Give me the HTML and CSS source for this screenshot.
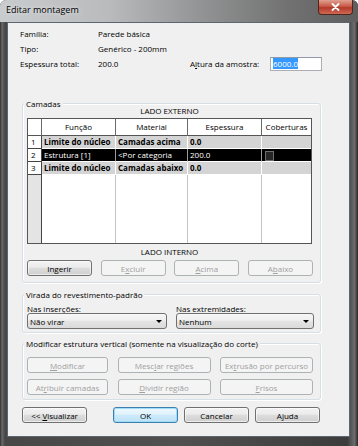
FILE: index.html
```html
<!DOCTYPE html>
<html lang="pt-BR">
<head>
    <meta charset="UTF-8">
    <title>Editar montagem</title>
    <link rel="stylesheet" href="styles.css">
</head>
<body>
<div class="window">
    <div class="titlebar">
        <span class="title">Editar montagem</span>
        <span class="close-btn">
            <svg width="9" height="8" viewBox="0 0 9 8"><path d="M1.5 1 L7.5 7 M7.5 1 L1.5 7" stroke="#fff" stroke-width="1.8" stroke-linecap="round"/></svg>
        </span>
    </div>

    <div class="client">
        <div class="info">
            <div class="info-row"><span class="info-label">Família:</span><span>Parede básica</span></div>
            <div class="info-row"><span class="info-label">Tipo:</span><span>Genérico - 200mm</span></div>
            <div class="info-row">
                <span class="info-label">Espessura total:</span>
                <span class="info-value">200.0</span>
                <span class="height-label">A<u>l</u>tura da amostra:</span>
                <span class="textbox"><span class="selected">6000.0</span></span>
            </div>
        </div>

        <!-- Camadas -->
        <div class="group group-layers">
            <span class="group-title">Camadas</span>
            <div class="side-label">LADO EXTERNO</div>
            <div class="layers-table">
                <div class="t-row t-head">
                    <div class="cell idx"></div>
                    <div class="cell">Função</div>
                    <div class="cell">Material</div>
                    <div class="cell">Espessura</div>
                    <div class="cell">Coberturas</div>
                </div>
                <div class="t-row t-core">
                    <div class="cell idx">1</div>
                    <div class="cell">Limite do núcleo</div>
                    <div class="cell">Camadas acima</div>
                    <div class="cell">0.0</div>
                    <div class="cell"></div>
                </div>
                <div class="t-row t-selected">
                    <div class="cell idx">2</div>
                    <div class="cell">Estrutura [1]</div>
                    <div class="cell">&lt;Por categoria</div>
                    <div class="cell">200.0</div>
                    <div class="cell"><span class="checkbox"></span></div>
                </div>
                <div class="t-row t-core">
                    <div class="cell idx">3</div>
                    <div class="cell">Limite do núcleo</div>
                    <div class="cell">Camadas abaixo</div>
                    <div class="cell">0.0</div>
                    <div class="cell"></div>
                </div>
                <div class="t-row t-fill">
                    <div class="cell idx"></div>
                    <div class="cell"></div>
                    <div class="cell"></div>
                    <div class="cell"></div>
                    <div class="cell"></div>
                </div>
            </div>
            <div class="side-label">LADO INTERNO</div>
            <div class="btn-row four">
                <button class="btn">In<u>g</u>erir</button>
                <button class="btn disabled">E<u>x</u>cluir</button>
                <button class="btn disabled"><u>A</u>cima</button>
                <button class="btn disabled">A<u>b</u>aixo</button>
            </div>
        </div>

        <!-- Virada do revestimento -->
        <div class="group group-wrap">
            <span class="group-title">Virada do revestimento-padrão</span>
            <div class="combo-grid">
                <span>Nas <u>i</u>nserções:</span>
                <span>Nas <u>e</u>xtremidades:</span>
                <div class="combo"><span>Não virar</span><span class="arrow"></span></div>
                <div class="combo"><span>Nenhum</span><span class="arrow"></span></div>
            </div>
        </div>

        <!-- Estrutura vertical -->
        <div class="group group-vertical">
            <span class="group-title">Modificar estrutura vertical (somente na visualização do corte)</span>
            <div class="btn-grid">
                <button class="btn disabled"><u>M</u>odificar</button>
                <button class="btn disabled">Mesc<u>l</u>ar regiões</button>
                <button class="btn disabled">Ex<u>t</u>rusão por percurso</button>
                <button class="btn disabled">At<u>r</u>ibuir camadas</button>
                <button class="btn disabled"><u>D</u>ividir região</button>
                <button class="btn disabled"><u>F</u>risos</button>
            </div>
        </div>

        <div class="footer-row">
            <button class="btn preview">&lt;&lt; <u>V</u>isualizar</button>
            <button class="btn default">OK</button>
            <button class="btn">Cancelar</button>
            <button class="btn">A<u>j</u>uda</button>
        </div>
    </div>
</div>
</body>
</html>
```

FILE: styles.css
```css
body {
    margin: 0;
    font-family: "Open Sans", "Noto Sans", sans-serif;
    font-size: 8px;
    color: #000;
    background: #fff;
}
.window {
    width: 358px;
    height: 446px;
    display: flex;
    flex-direction: column;
    box-sizing: border-box;
    border-radius: 6px 6px 0 0;
    overflow: hidden;
    background: linear-gradient(to right, #2f2f2f 0, #6a6a6a 2px, #474747 5px, #505050 50%, #3c3c3c 97%, #6d6d6d 99%, #2a2a2a 100%);
}
.titlebar {
    height: 22px;
    display: flex;
    justify-content: space-between;
    align-items: flex-start;
    background: linear-gradient(to right, #c9ccce 0%, #b9bbbd 30%, #949596 55%, #727272 80%, #5e5e5e 100%);
}
.title {
    padding: 4px 0 0 6px;
    font-size: 9px;
    line-height: 12px;
    text-shadow: 0 0 4px #eee;
}
.close-btn {
    width: 35px;
    height: 15px;
    margin-right: 5px;
    box-sizing: border-box;
    display: flex;
    align-items: center;
    justify-content: center;
    border: 1px solid #4d2620;
    border-top: none;
    border-radius: 0 0 4px 4px;
    background: linear-gradient(#e0a090, #c95a48 45%, #b2392a 55%, #d06a55);
}
.client {
    flex: 1;
    margin: 0 8px 9px 7px;
    box-sizing: border-box;
    border: 1px solid #5b6670;
    background: #f0f0f0;
    padding-top: 3px;
}
.info {
    padding-left: 12px;
}
.info-row {
    display: flex;
    align-items: center;
    height: 15px;
}
.info-label {
    width: 78px;
}
.info-value {
    width: 92px;
}
.height-label {
    width: 80px;
}
.textbox {
    width: 52px;
    height: 14px;
    box-sizing: border-box;
    border: 1px solid #abadb3;
    border-top-color: #8e9aa6;
    background: #fff;
    padding: 1px 2px;
    line-height: 10px;
}
.selected {
    background: #3399ff;
    color: #fff;
}
.group {
    position: relative;
    width: 299px;
    margin-left: 14px;
    box-sizing: border-box;
    border: 1px solid #d5dfe5;
    border-radius: 3px;
    box-shadow: inset 1px 1px 0 #fff, 1px 1px 0 #fff;
}
.group-title {
    position: absolute;
    left: 1px;
    top: -6px;
    padding: 0 2px;
    line-height: 11px;
    background: #f0f0f0;
}
.group-layers {
    margin-top: 32px;
    padding: 1px 0 6px 4px;
}
.side-label {
    width: 285px;
    text-align: center;
    line-height: 12px;
}
.side-label + .btn-row {
    margin-top: 2px;
}
.layers-table {
    width: 285px;
    height: 126px;
    margin: 1px 0 2px;
    box-sizing: border-box;
    border: 1px solid #555;
    background: #fff;
    display: flex;
    flex-direction: column;
}
.t-row {
    display: grid;
    grid-template-columns: 14px 74px 72px 74px 1fr;
}
.cell {
    box-sizing: border-box;
    border-right: 1px solid #fff;
    border-bottom: 1px solid #fff;
    padding-left: 2px;
    white-space: nowrap;
    overflow: hidden;
}
.cell:last-child {
    border-right: none;
}
.cell.idx {
    background: #fff;
    border-right: 1px solid #444;
    border-bottom: 1px solid #444;
    padding-left: 3px;
}
.t-head .cell {
    height: 17px;
    line-height: 16px;
    text-align: center;
    padding: 0;
    border-right: 1px solid #6a6a6a;
    border-bottom: 1px solid #555;
}
.t-head .cell:last-child {
    border-right: none;
}
.t-core .cell,
.t-selected .cell {
    height: 13px;
    line-height: 12px;
}
.t-core .cell {
    background: #d4d4d4;
    font-weight: bold;
}
.t-selected .cell {
    background: #000;
    color: #fff;
    border-right-color: #9a9a9a;
}
.t-core .cell.idx,
.t-selected .cell.idx {
    background: #fff;
    color: #000;
    font-weight: normal;
    border-right-color: #444;
}
.checkbox {
    display: inline-block;
    width: 7px;
    height: 8px;
    margin: 2px 0 0 1px;
    vertical-align: top;
    border: 1px solid #6e6e6e;
    background: #262626;
}
.t-fill {
    flex: 1;
}
.t-fill .cell {
    border-bottom: none;
    border-right: 1px solid #c4c4c4;
}
.t-fill .cell.idx {
    background: #e4e4e4;
    border-right: 1px solid #444;
    border-bottom: none;
}
.t-fill .cell:last-child {
    border-right: none;
}
.btn-row.four {
    width: 286px;
    display: flex;
    justify-content: space-between;
}
.btn {
    height: 16px;
    width: 65px;
    box-sizing: border-box;
    padding: 0;
    font: inherit;
    color: #000;
    border: 1px solid #707070;
    border-radius: 3px;
    background: linear-gradient(#f3f3f3, #ebebeb 45%, #dddddd 50%, #cfcfcf);
    box-shadow: inset 0 0 0 1px rgba(255, 255, 255, 0.6);
}
.btn.disabled {
    color: #a0a0a0;
    border-color: #adb2b5;
    background: #f4f4f4;
    box-shadow: none;
}
.btn.default {
    border-color: #3c7fb1;
    background: linear-gradient(#eef8fd, #e0f2fc 45%, #cdeafa 50%, #bfe2f5);
    box-shadow: inset 0 0 0 1px #9fdcf7;
}
.group-wrap {
    margin-top: 11px;
    padding: 8px 0 3px 4px;
}
.combo-grid {
    display: grid;
    grid-template-columns: 140px 138px;
    column-gap: 9px;
    line-height: 11px;
}
.combo {
    height: 16px;
    margin-top: -1px;
    box-sizing: border-box;
    display: flex;
    align-items: center;
    justify-content: space-between;
    padding: 0 4px 0 2px;
    border: 1px solid #707070;
    border-radius: 3px;
    background: linear-gradient(#f7f7f7, #efefef 45%, #e4e4e4 50%, #dadada);
}
.arrow {
    width: 0;
    height: 0;
    border-left: 3px solid transparent;
    border-right: 3px solid transparent;
    border-top: 3px solid #000;
}
.group-vertical {
    margin-top: 10px;
    padding: 13px 0 4px 4px;
}
.btn-grid {
    width: 286px;
    display: grid;
    grid-template-columns: 81px 93px 93px;
    justify-content: space-between;
    row-gap: 6px;
}
.btn-grid .btn {
    width: auto;
}
.footer-row {
    width: 298px;
    margin: 7px 0 0 14px;
    display: flex;
    gap: 6px;
}
.footer-row .preview {
    margin-right: auto;
}
```
